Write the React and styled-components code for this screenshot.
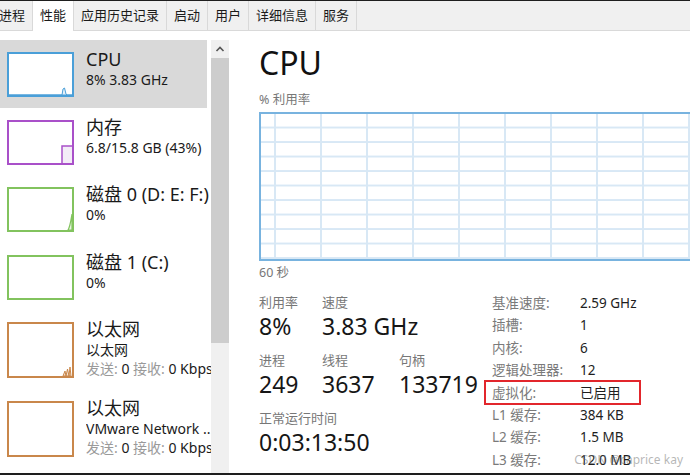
import React from 'react';
import styled, { createGlobalStyle, css } from 'styled-components';

const FONT = `"Noto Sans", "Noto Sans CJK SC", sans-serif`;

const GlobalStyle = createGlobalStyle`
  html, body { margin: 0; padding: 0; background: #fff; overflow: hidden; }
  body { font-family: ${FONT}; color: #1a1a1a; }
  * { box-sizing: border-box; }
`;

const Window = styled.div`
  position: relative;
  width: 690px;
  height: 475px;
  display: flex;
  flex-direction: column;
  border-top: 1px solid #1e1e1e;
  border-bottom: 2px solid #1e1e1e;
  overflow: hidden;
`;

const TabBar = styled.div`
  display: flex;
  flex: none;
  height: 30px;
  margin-left: -8px;
  background: #f0f0f0;
  border-bottom: 1px solid #d9d9d9;
`;

const Tab = styled.div`
  padding: 0 7px;
  font-size: 13px;
  line-height: 29px;
  color: #1a1a1a;
  border-right: 1px solid #d9d9d9;
  white-space: nowrap;
  ${p => p.$active && css`
    background: #fff;
    height: 30px;
    border-left: 1px solid #d9d9d9;
    margin-left: -1px;
  `}
`;

const Body = styled.div`
  display: flex;
  flex: 1;
  min-height: 0;
`;

const Sidebar = styled.div`
  width: 211px;
  flex: none;
  padding-top: 9px;
  overflow: hidden;
`;

const Item = styled.div`
  display: flex;
  gap: 12px;
  height: ${p => p.$h}px;
  padding: 12px 0 0 7px;
  ${p => p.$selected && css`
    background: linear-gradient(to right, #d9d9d9 207px, transparent 207px);
  `}
`;

const Thumb = styled.div`
  flex: none;
  width: 67px;
  height: ${p => p.$h}px;
  border: 2px solid ${p => p.$color};
  background: #fff;
  svg { display: block; width: 100%; height: 100%; }
`;

const TextCol = styled.div`
  margin-top: -4px;
  min-width: 0;
  flex: 1;
  overflow: hidden;
  white-space: nowrap;
`;

const ItemTitle = styled.div`
  font-size: 18px;
  line-height: 22px;
  color: #1a1a1a;
`;

const ItemSub = styled.div`
  font-size: 14px;
  line-height: 19px;
  color: #1a1a1a;
`;

const Muted = styled.span`
  color: #9a9a9a;
`;

const Scrollbar = styled.div`
  width: 18px;
  flex: none;
  margin-top: 9px;
  display: flex;
  flex-direction: column;
  background: #f0f0f0;
`;

const ScrollArrow = styled.div`
  height: 18px;
  display: flex;
  align-items: center;
  justify-content: center;
`;

const ScrollThumb = styled.div`
  height: 285px;
  background: #cdcdcd;
`;

const Main = styled.div`
  flex: 1;
  min-width: 0;
  padding: 12px 0 0 30px;
  overflow: hidden;
  display: flex;
  flex-direction: column;
`;

const BigTitle = styled.div`
  font-size: 32px;
  line-height: 40px;
  color: #111;
`;

const SmallLabel = styled.div`
  font-size: 12.5px;
  line-height: 17px;
  color: #777;
  margin-top: ${p => p.$mt || 0}px;
`;

const Graph = styled.div`
  flex: none;
  width: 450px;
  height: 149px;
  margin-top: 4px;
  border: 2px solid #78b3df;
  background-color: #fff;
  background-image:
    linear-gradient(to right, #d8e8f5 2px, transparent 2px),
    linear-gradient(to top, #d8e8f5 2px, transparent 2px);
  background-size: 46px 100%, 100% 10%;
  background-position: 13px 0, 0 0;
`;

const StatsArea = styled.div`
  display: flex;
  margin-top: 11px;
`;

const StatsLeft = styled.div`
  width: 233px;
  flex: none;
  display: flex;
  flex-direction: column;
  gap: 10px;
`;

const StatRow = styled.div`
  display: flex;
`;

const Stat = styled.div`
  width: ${p => (p.$w ? `${p.$w}px` : 'auto')};
  flex: none;
  white-space: nowrap;
`;

const StatLabel = styled.div`
  font-size: 13px;
  line-height: 20px;
  color: #777;
`;

const StatValue = styled.div`
  font-size: 23px;
  line-height: 28px;
  color: #161616;
`;

const Details = styled.div`
  display: grid;
  grid-template-columns: 88px auto;
  grid-auto-rows: 22.4px;
  align-items: center;
  font-size: 13.5px;
  line-height: 22.4px;
  white-space: nowrap;
`;

const DetailLabel = styled.div`
  color: #7a7a7a;
  position: relative;
  ${p => p.$boxed && css`
    &::before {
      content: '';
      position: absolute;
      left: -8px;
      top: -2px;
      bottom: -1px;
      width: 153px;
      border: 2px solid #e2262c;
      pointer-events: none;
    }
  `}
`;

const DetailValue = styled.div`
  color: #1e1e1e;
`;

const Watermark = styled.div`
  position: absolute;
  right: 7px;
  bottom: 5px;
  font-size: 12px;
  line-height: 16px;
  color: rgba(110, 110, 110, 0.5);
  pointer-events: none;
`;

const tabs = ['进程', '性能', '应用历史记录', '启动', '用户', '详细信息', '服务'];

const COLORS = {
  cpu: '#4a9fd8',
  mem: '#a950c9',
  disk: '#82c35e',
  net: '#c9874b',
};

function CpuSpark() {
  return (
    <svg viewBox="0 0 63 41" preserveAspectRatio="none">
      <path d="M0,41 L53,41 L54,35 L55.5,34 L57,40 L58,41 L63,41 Z" fill="#e3f0fa" stroke={COLORS.cpu} strokeWidth="1" />
    </svg>
  );
}

function MemSpark() {
  return (
    <svg viewBox="0 0 63 41" preserveAspectRatio="none">
      <path d="M53,41 L53,24 L63,24 L63,41 Z" fill="#f3ecf7" />
      <path d="M53,41 L53,24 L63,24" fill="none" stroke={COLORS.mem} strokeWidth="1.5" />
    </svg>
  );
}

function DiskSpark() {
  return (
    <svg viewBox="0 0 63 41" preserveAspectRatio="none">
      <path d="M59,41 C61,38 62,31 63,25 L63,41 Z" fill="#e9f5e2" stroke={COLORS.disk} strokeWidth="1.2" />
    </svg>
  );
}

function NetSpark() {
  return (
    <svg viewBox="0 0 63 52" preserveAspectRatio="none">
      <path d="M54,52 L56,47 L57,52 L58.5,45 L60,52 L61,43 L62,52 Z" fill="#f5e4d4" stroke={COLORS.net} strokeWidth="1" />
    </svg>
  );
}

const details = [
  ['基准速度:', '2.59 GHz'],
  ['插槽:', '1'],
  ['内核:', '6'],
  ['逻辑处理器:', '12'],
  ['虚拟化:', '已启用', true],
  ['L1 缓存:', '384 KB'],
  ['L2 缓存:', '1.5 MB'],
  ['L3 缓存:', '12.0 MB'],
];

export default function App() {
  return (
    <>
      <GlobalStyle />
      <Window>
        <TabBar>
          {tabs.map(t => (
            <Tab key={t} $active={t === '性能'}>{t}</Tab>
          ))}
        </TabBar>
        <Body>
          <Sidebar>
            <Item $h={68} $selected>
              <Thumb $h={45} $color={COLORS.cpu}><CpuSpark /></Thumb>
              <TextCol>
                <ItemTitle>CPU</ItemTitle>
                <ItemSub>8% 3.83 GHz</ItemSub>
              </TextCol>
            </Item>
            <Item $h={67}>
              <Thumb $h={45} $color={COLORS.mem}><MemSpark /></Thumb>
              <TextCol>
                <ItemTitle>内存</ItemTitle>
                <ItemSub>6.8/15.8 GB (43%)</ItemSub>
              </TextCol>
            </Item>
            <Item $h={68}>
              <Thumb $h={45} $color={COLORS.disk}><DiskSpark /></Thumb>
              <TextCol>
                <ItemTitle>磁盘 0 (D: E: F:)</ItemTitle>
                <ItemSub>0%</ItemSub>
              </TextCol>
            </Item>
            <Item $h={67}>
              <Thumb $h={45} $color={COLORS.disk} />
              <TextCol>
                <ItemTitle>磁盘 1 (C:)</ItemTitle>
                <ItemSub>0%</ItemSub>
              </TextCol>
            </Item>
            <Item $h={79}>
              <Thumb $h={56} $color={COLORS.net}><NetSpark /></Thumb>
              <TextCol>
                <ItemTitle>以太网</ItemTitle>
                <ItemSub>以太网</ItemSub>
                <ItemSub><Muted>发送:</Muted> 0 <Muted>接收:</Muted> 0 Kbps</ItemSub>
              </TextCol>
            </Item>
            <Item $h={79}>
              <Thumb $h={56} $color={COLORS.net} />
              <TextCol>
                <ItemTitle>以太网</ItemTitle>
                <ItemSub>VMware Network ...</ItemSub>
                <ItemSub><Muted>发送:</Muted> 0 <Muted>接收:</Muted> 0 Kbps</ItemSub>
              </TextCol>
            </Item>
          </Sidebar>
          <Scrollbar>
            <ScrollArrow>
              <svg width="10" height="8" viewBox="0 0 10 8">
                <path d="M1.5,6 L5,2.5 L8.5,6" fill="none" stroke="#555" strokeWidth="1.6" />
              </svg>
            </ScrollArrow>
            <ScrollThumb />
          </Scrollbar>
          <Main>
            <BigTitle>CPU</BigTitle>
            <SmallLabel $mt={8}>% 利用率</SmallLabel>
            <Graph />
            <SmallLabel $mt={3}>60 秒</SmallLabel>
            <StatsArea>
              <StatsLeft>
                <StatRow>
                  <Stat $w={63}>
                    <StatLabel>利用率</StatLabel>
                    <StatValue>8%</StatValue>
                  </Stat>
                  <Stat>
                    <StatLabel>速度</StatLabel>
                    <StatValue>3.83 GHz</StatValue>
                  </Stat>
                </StatRow>
                <StatRow>
                  <Stat $w={63}>
                    <StatLabel>进程</StatLabel>
                    <StatValue>249</StatValue>
                  </Stat>
                  <Stat $w={77}>
                    <StatLabel>线程</StatLabel>
                    <StatValue>3637</StatValue>
                  </Stat>
                  <Stat>
                    <StatLabel>句柄</StatLabel>
                    <StatValue>133719</StatValue>
                  </Stat>
                </StatRow>
                <StatRow>
                  <Stat>
                    <StatLabel>正常运行时间</StatLabel>
                    <StatValue>0:03:13:50</StatValue>
                  </Stat>
                </StatRow>
              </StatsLeft>
              <Details>
                {details.map(([l, v, boxed]) => (
                  <React.Fragment key={l}>
                    <DetailLabel $boxed={boxed}>{l}</DetailLabel>
                    <DetailValue>{v}</DetailValue>
                  </React.Fragment>
                ))}
              </Details>
            </StatsArea>
          </Main>
        </Body>
        <Watermark>CSDN @caprice kay</Watermark>
      </Window>
    </>
  );
}
